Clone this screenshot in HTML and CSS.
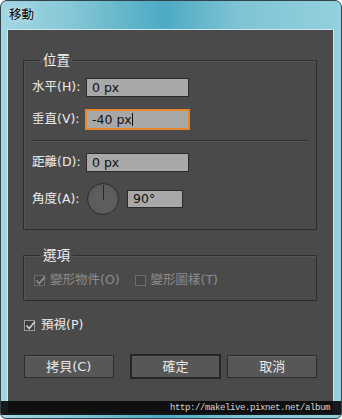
FILE: index.html
```html
<!DOCTYPE html>
<html>
<head>
  <meta charset="utf-8">
  <title>移動</title>
  <link rel="stylesheet" href="styles.css">
</head>
<body>
  <div class="window">
    <div class="titlebar">移動</div>

    <div class="client">

      <fieldset class="group group-position">
        <legend>位置</legend>
        <div class="row">
          <label class="label">水平(H):</label>
          <div class="field">0 px</div>
        </div>
        <div class="row row-gap">
          <label class="label">垂直(V):</label>
          <div class="field focused">-40 px<span class="caret"></span></div>
        </div>
        <div class="sep"></div>
        <div class="row">
          <label class="label">距離(D):</label>
          <div class="field">0 px</div>
        </div>
        <div class="row row-dial">
          <label class="label">角度(A):</label>
          <div class="dial"><span class="needle"></span></div>
          <div class="field field-small">90°</div>
        </div>
      </fieldset>

      <fieldset class="group group-options">
        <legend>選項</legend>
        <div class="row row-checks">
          <span class="check disabled checked">
            <svg width="11" height="11" viewBox="0 0 11 11"><path d="M1.5 5.5 L4.2 8.5 L9.8 1.8" fill="none" stroke="#8e8e8e" stroke-width="1.8"/></svg>
          </span>
          <span class="check-text disabled">變形物件(O)</span>
          <span class="check disabled second"></span>
          <span class="check-text disabled">變形圖樣(T)</span>
        </div>
      </fieldset>

      <div class="preview">
        <span class="check checked">
          <svg width="11" height="11" viewBox="0 0 11 11"><path d="M1.5 5.5 L4.2 8.5 L9.8 1.8" fill="none" stroke="#d4d4d4" stroke-width="1.6"/></svg>
        </span>
        <span class="check-text">預視(P)</span>
      </div>

      <div class="buttons">
        <button class="btn">拷貝(C)</button>
        <button class="btn btn-default">確定</button>
        <button class="btn btn-cancel">取消</button>
      </div>

    </div>

    <div class="watermark">http://makelive.pixnet.net/album</div>
  </div>
</body>
</html>
```

FILE: styles.css
```css
html, body { margin: 0; padding: 0; background: #fff; }

body {
  font-family: "DejaVu Sans", "Noto Sans CJK TC", sans-serif;
  font-size: 12.5px;
  line-height: 16px;
}

.window {
  position: relative;
  width: 342px;
  height: 419px;
  box-sizing: border-box;
  border: 1px solid #31434b;
  border-radius: 7px 7px 6px 6px;
  background:
    linear-gradient(90deg, #a2d6e2 0%, #86c8d7 20%, #4caac3 48%, #7fc4d4 70%, #94d0dd 100%);
  overflow: hidden;
}

.titlebar {
  height: 28px;
  padding-left: 8px;
  line-height: 27px;
  font-size: 12.5px;
  color: #000;
  text-shadow: 0 0 6px rgba(255,255,255,0.9);
}

.client {
  margin-left: 6px;
  width: 327px;
  height: 384px;
  box-sizing: border-box;
  border: 1px solid #cfe7ee;
  border-bottom: none;
  background: #4a4a4a;
  padding: 22px 16px 0 15px;
}

/* groups */
.group {
  margin: 0;
  padding: 0 8px;
  border: 1px solid #2e2e2e;
  box-shadow: inset 1px 1px 0 #555;
  min-width: 0;
}
.group legend {
  margin-left: 8px;
  padding: 0 3px 0 3px;
  color: #f0f0f0;
  font-size: 13.5px;
  line-height: 16px;
}
.group-position { padding-top: 9px; padding-bottom: 14px; }
.group-options { margin-top: 17px; padding-top: 9px; padding-bottom: 12px; }

.row {
  display: flex;
  align-items: center;
  height: 20px;
}
.row-gap { margin-top: 12px; }
.row-dial { margin-top: 11px; height: 32px; }

.label {
  width: 54px;
  flex: none;
  color: #ececec;
  white-space: nowrap;
}

.field {
  width: 103px;
  height: 19px;
  box-sizing: border-box;
  border: 1px solid #2b2b2b;
  background: #a8a8a8;
  color: #111;
  padding-left: 5px;
  line-height: 17px;
}
.field.focused {
  border-color: #e8862a;
  box-shadow: 0 0 0 1px #e8862a;
}
.caret {
  display: inline-block;
  width: 1px;
  height: 13px;
  background: #111;
  vertical-align: -2px;
}
.field-small { width: 56px; margin-left: 8px; height: 18px; line-height: 16px; }

.sep {
  margin: 11px 0 11px;
  height: 1px;
  background: #2f2f2f;
  box-shadow: 0 1px 0 #555;
}

.dial {
  position: relative;
  width: 32px;
  height: 32px;
  box-sizing: border-box;
  margin-left: 1px;
  border-radius: 50%;
  border: 1px solid #2e2e2e;
  background: radial-gradient(circle at 50% 55%, #606060 0%, #5b5b5b 70%, #505050 100%);
}
.needle {
  position: absolute;
  left: 15px;
  top: 1px;
  width: 1px;
  height: 15px;
  background: #262626;
}

/* checkboxes */
.row-checks { height: 16px; }
.check {
  display: inline-block;
  width: 11px;
  height: 11px;
  box-sizing: border-box;
  border: 1px solid #9a9a9a;
  background: #3c3c3c;
  flex: none;
  position: relative;
}
.check svg { position: absolute; left: 0; top: -1px; }
.check.disabled { border-color: #6d6d6d; background: #474747; margin-left: 2px; }
.check.second { margin-left: 15px; }
.check-text { margin-left: 6px; color: #ececec; white-space: nowrap; }
.check-text.disabled { color: #8c8c8c; margin-left: 5px; }

.preview {
  display: flex;
  align-items: center;
  height: 16px;
  margin-top: 16px;
  padding-left: 1px;
}

/* buttons */
.buttons {
  display: flex;
  align-items: center;
  height: 25px;
  margin-top: 21px;
  padding-left: 1px;
}
.btn {
  width: 90px;
  height: 23px;
  box-sizing: border-box;
  margin: 0;
  padding: 0;
  border: 1px solid #2c2c2c;
  background: #575757;
  box-shadow: inset 0 1px 0 #636363;
  color: #e8e8e8;
  font-family: inherit;
  font-size: 13px;
  line-height: 16px;
}
.btn-default {
  width: 92px;
  height: 25px;
  margin-left: 16px;
  border: 2px solid #262626;
}
.btn-cancel { margin-left: 6px; }

/* watermark overlay */
.watermark {
  position: absolute;
  left: 0;
  right: 0;
  top: 400px;
  height: 14px;
  background: rgba(10,10,10,0.92);
  color: #d8d8d8;
  font-family: "Liberation Mono", monospace;
  font-size: 9px;
  letter-spacing: -0.4px;
  line-height: 14px;
  text-align: right;
  padding-right: 11px;
}
```
